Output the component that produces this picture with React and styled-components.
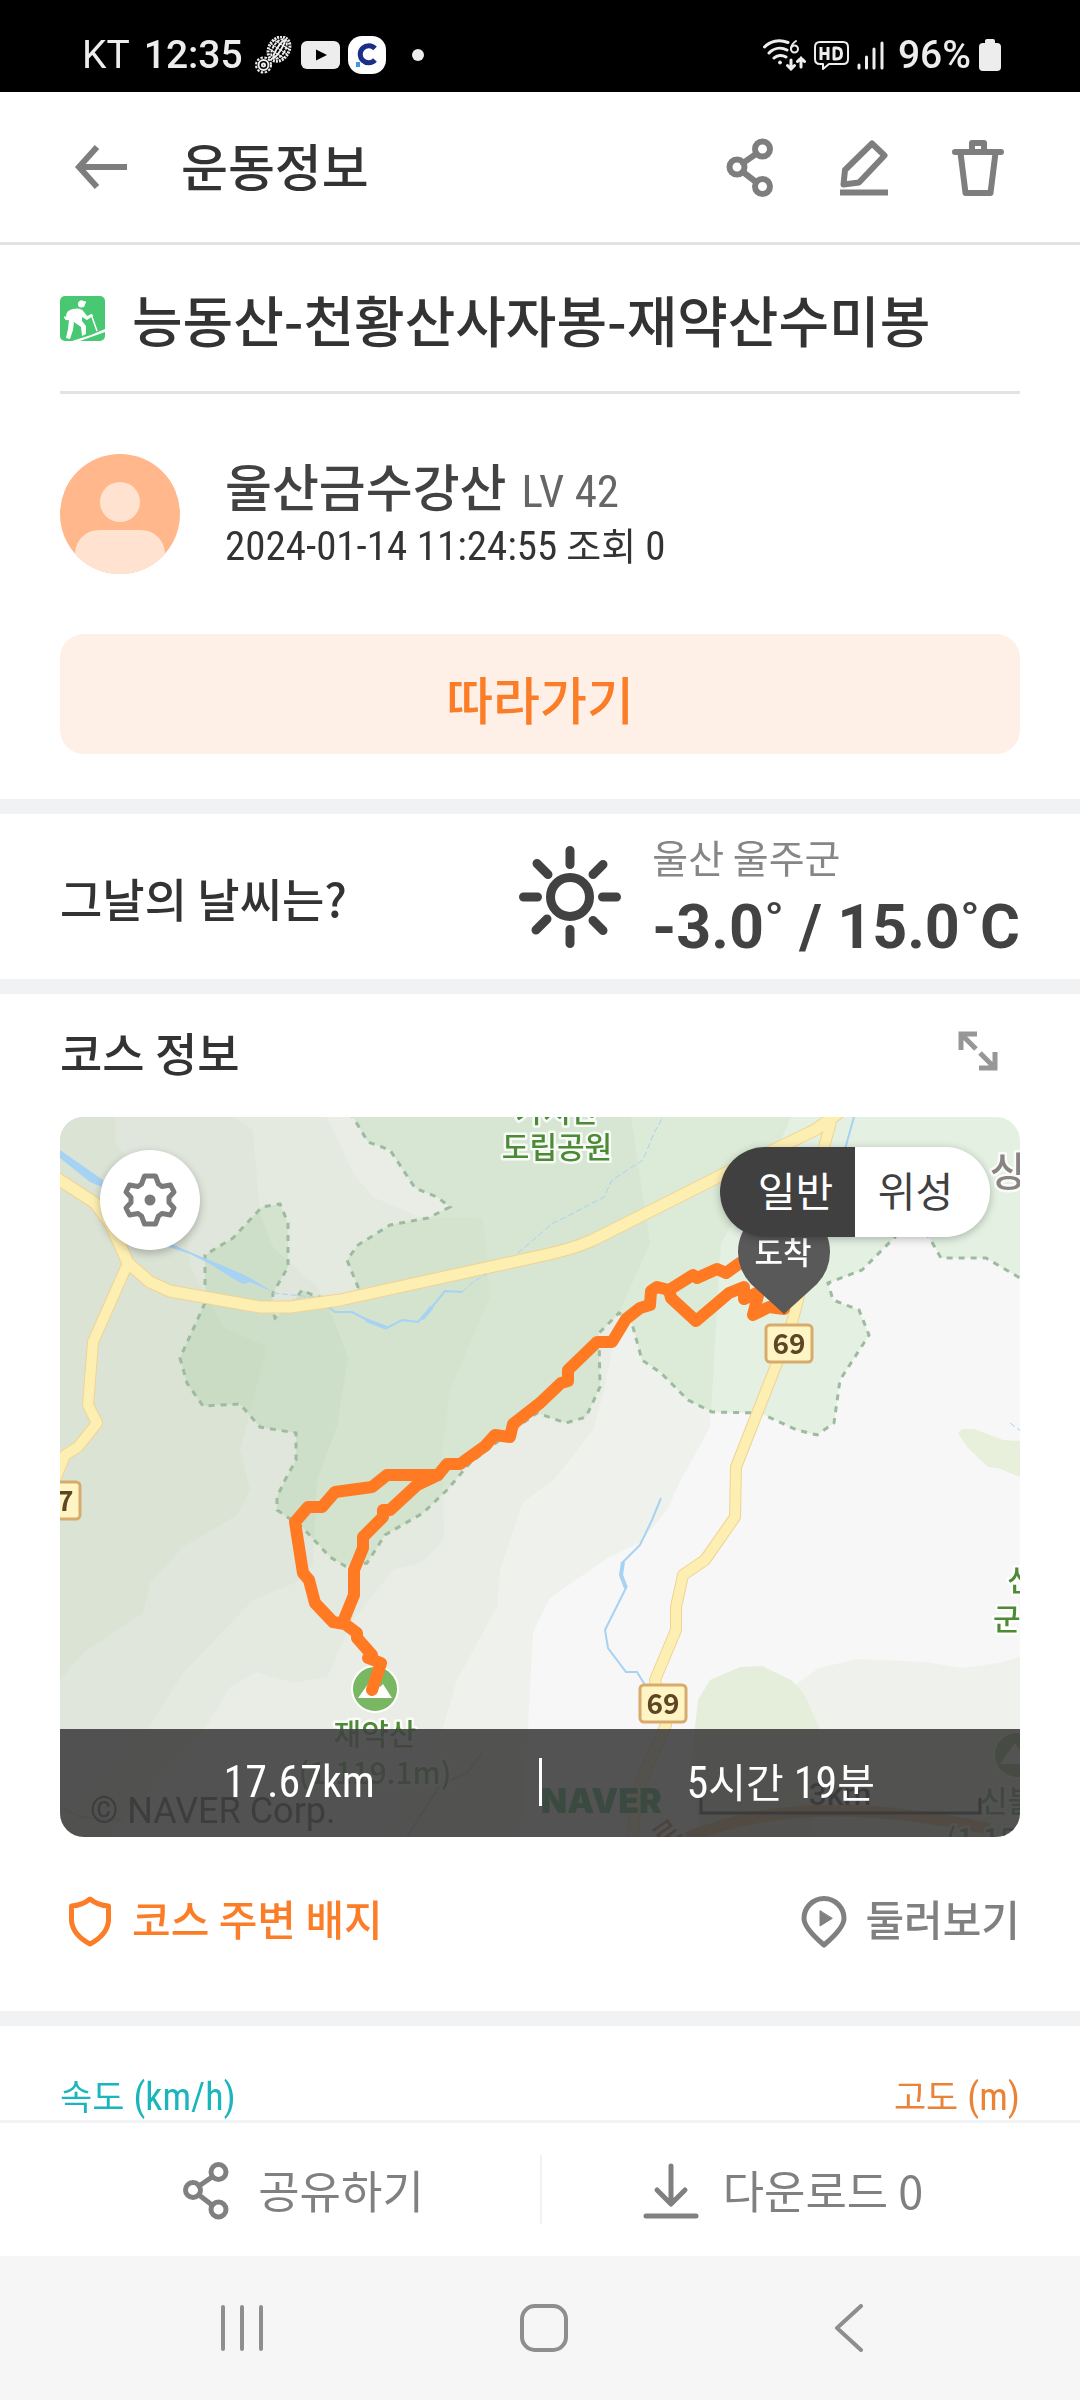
import React, { useState } from 'react';
import styled, { createGlobalStyle, css } from 'styled-components';

const GlobalStyle = createGlobalStyle`
  * {
    box-sizing: border-box;
  }

  body {
    margin: 0;
    background: #fff;
    color: #333;
    font-family: 'Roboto Condensed', 'Noto Sans CJK KR', sans-serif;
  }

  h1, h2, p {
    margin: 0;
    font-weight: 500;
  }

  button {
    padding: 0;
    border: 0;
    background: none;
    color: inherit;
    font: inherit;
    cursor: pointer;
  }

  a {
    color: inherit;
    text-decoration: none;
  }

  svg {
    display: block;
    flex: none;
  }
`;

const korean = css`
  font-family: 'Noto Sans CJK KR', sans-serif;
`;

const Page = styled.div`
  display: flex;
  flex-direction: column;
  min-height: 100vh;
`;

// Phone status bar
const StatusBar = styled.div`
  display: flex;
  align-items: center;
  justify-content: space-between;
  height: 92px;
  padding: 18px 79px 0 82px;
  background: #000;
  color: #ededed;
  font: 500 39px/46px Roboto, sans-serif;
`;

const StatusGroup = styled.div`
  display: flex;
  align-items: center;
  gap: 8px;
`;

const Carrier = styled.span`
  margin-right: 6px;
  font-weight: 400;
`;

const Clock = styled.span`
  margin-right: 4px;
`;

const Battery = styled.span`
  margin-left: 6px;
`;

const MoreDot = styled.span`
  width: 12px;
  height: 12px;
  margin-left: 18px;
  border-radius: 50%;
  background: #ededed;
`;

// App header
const Header = styled.header`
  display: flex;
  align-items: center;
  height: 153px;
  padding: 0 72px 0 71px;
  border-bottom: 3px solid #e3e3e3;
  color: #7e7e7e;
`;

const HeaderTitle = styled.h1`
  ${korean}
  flex: 1;
  margin-left: 50px;
  padding-bottom: 4px;
  color: #333;
  font-size: 51px;
  line-height: 72px;
`;

const HeaderActions = styled.div`
  display: flex;
  gap: 54px;
`;

const Section = styled.section`
  padding: 0 60px;
  border-bottom: ${(p) => (p.$last ? '0' : '15px solid #f0f2f4')};
`;

const CourseTitle = styled.div`
  display: flex;
  align-items: center;
  gap: 27px;
  height: 149px;
  border-bottom: 3px solid #e3e3e3;
`;

const CourseName = styled.h2`
  ${korean}
  font-size: 55px;
  line-height: 80px;
`;

const Profile = styled.div`
  display: flex;
  align-items: center;
  gap: 45px;
  height: 240px;
`;

const UserName = styled.p`
  display: flex;
  align-items: baseline;
  gap: 15px;
  color: #424242;
  line-height: 54px;
  white-space: nowrap;
`;

const Name = styled.span`
  ${korean}
  font-size: 51px;
`;

const Level = styled.span`
  color: #666;
  font-size: 45px;
  font-weight: 400;
`;

const Meta = styled.p`
  display: flex;
  align-items: baseline;
  gap: 9px;
  font-size: 41px;
  font-weight: 400;
  line-height: 50px;
`;

const Views = styled.span`
  ${korean}
  font-size: 38px;
`;

const FollowButton = styled.button`
  ${korean}
  display: block;
  width: 100%;
  height: 120px;
  margin-bottom: 45px;
  padding-top: 8px;
  border-radius: 24px;
  background: #fff0e7;
  color: #fb7d28;
  font-size: 51px;
  font-weight: 500;
`;

const Weather = styled.div`
  display: flex;
  align-items: center;
  height: 165px;
`;

const SectionTitle = styled.h2`
  ${korean}
  flex: 1;
  font-size: 46px;
  line-height: 64px;
`;

const WeatherInfo = styled.div`
  margin-left: 31px;
`;

const Place = styled.p`
  ${korean}
  color: #868686;
  font-size: 39px;
  font-weight: 400;
  line-height: 60px;
`;

const Temperature = styled.p`
  color: #424242;
  font: 700 61px/82px Roboto, sans-serif;
`;

const CourseHeader = styled.div`
  display: flex;
  align-items: center;
  height: 123px;
  padding: 0 18px 10px 0;
  color: #979797;

  ${SectionTitle} {
    color: #333;
  }
`;

// Course map with its floating controls
const MapCard = styled.div`
  position: relative;
  height: 720px;
  overflow: hidden;
  border-radius: 24px;
`;

const MapDrawing = styled.svg`
  width: 100%;
  height: 100%;
`;

const ParkArea = styled.path`
  fill: #ebf8ea;
  mix-blend-mode: multiply;
`;

const MapLabel = styled.text`
  ${korean}
  fill: ${(p) => p.$color || '#4d8a35'};
  stroke: #fff;
  stroke-opacity: 0.8;
  stroke-width: 5px;
  stroke-linejoin: round;
  paint-order: stroke;
  font-size: ${(p) => p.$size || 30}px;
  font-weight: 500;
`;

const SettingsButton = styled.button`
  position: absolute;
  top: 33px;
  left: 40px;
  display: grid;
  place-items: center;
  width: 100px;
  height: 100px;
  border-radius: 50%;
  background: #fff;
  box-shadow: 0 3px 9px rgba(0, 0, 0, 0.25);
  color: #7a7a7a;
`;

const MapTypes = styled.div`
  position: absolute;
  top: 30px;
  right: 30px;
  display: flex;
  overflow: hidden;
  border-radius: 45px;
  box-shadow: 0 2px 9px rgba(0, 0, 0, 0.25);
`;

const MapType = styled.button`
  ${korean}
  width: 135px;
  height: 90px;
  padding-bottom: 6px;
  background: ${(p) => (p.$active ? '#404040' : '#fff')};
  color: ${(p) => (p.$active ? '#fff' : '#404040')};
  font-size: 41px;

  &:first-child {
    padding-left: 16px;
  }

  &:last-child {
    padding-right: 14px;
  }
`;

const Totals = styled.div`
  position: absolute;
  right: 0;
  bottom: 0;
  left: 0;
  display: flex;
  align-items: center;
  height: 108px;
  padding-bottom: 2px;
  background: rgba(64, 64, 64, 0.9);
  color: #fff;
  font-size: 44px;
  line-height: 54px;
`;

const Total = styled.span`
  display: flex;
  flex: 1;
  align-items: baseline;
  justify-content: center;
`;

const Hangul = styled.span`
  ${korean}
  margin-right: ${(p) => (p.$gap ? '10px' : '0')};
  font-size: 41px;
  line-height: 50px;
`;

const TotalsDivider = styled.span`
  width: 3px;
  height: 48px;
  background: #fff;
`;

const CourseLinks = styled.div`
  display: flex;
  align-items: center;
  justify-content: space-between;
  height: 174px;
  padding-bottom: 6px;
`;

const CourseLink = styled.a`
  ${korean}
  display: flex;
  align-items: center;
  gap: 12px;
  color: ${(p) => (p.$accent ? '#fb7d28' : '#808080')};
  font-size: 42px;
  font-weight: 500;
  line-height: 60px;

  span {
    padding-bottom: 6px;
  }
`;

const ChartLegend = styled.div`
  display: flex;
  justify-content: space-between;
  padding: 49px 0 5px;
  font-size: 38px;
  line-height: 40px;
`;

const Legend = styled.span`
  display: flex;
  align-items: baseline;
  gap: 9px;
  height: 40px;
  color: ${(p) => p.$color};
`;

const LegendName = styled.span`
  ${korean}
  font-size: 35px;
`;

const ActionBar = styled.footer`
  display: grid;
  grid-template-columns: 1fr 2px 1fr;
  align-items: center;
  height: 136px;
  margin-top: auto;
  padding: 0 58px 0 60px;
  border-top: 3px solid #f1f3f4;
  background: #fff;
  color: #808080;
`;

const Action = styled.button`
  ${korean}
  display: flex;
  align-items: center;
  justify-content: center;
  gap: 22px;
  font-size: 45px;
  line-height: 64px;
`;

const ActionDivider = styled.span`
  height: 69px;
  background: #eff1f2;
`;

const NavBar = styled.nav`
  display: grid;
  grid-template-columns: repeat(3, 1fr);
  height: 144px;
  padding: 0 82px 0 91px;
  background: #f6f6f6;
  color: #8e8e8e;
`;

const NavButton = styled.button`
  display: grid;
  place-items: center;
`;

const Stroke = ({ size = 60, width = 5, children, ...rest }) => (
  <svg
    width={size}
    height={size}
    viewBox={`0 0 ${size} ${size}`}
    fill="none"
    stroke="currentColor"
    strokeWidth={width}
    strokeLinecap="round"
    strokeLinejoin="round"
    aria-hidden="true"
    {...rest}
  >
    {children}
  </svg>
);

const TireIcon = () => (
  <svg width="38" height="38" viewBox="0 0 38 38" fill="none" stroke="#ededed" aria-hidden="true">
    <g transform="rotate(32 24 13)">
      <ellipse cx="24" cy="13" rx="10" ry="13" strokeWidth="3" strokeDasharray="2 1" />
      <ellipse cx="24" cy="13" rx="6" ry="11" strokeWidth="2" strokeDasharray="3 1" />
      <ellipse cx="24" cy="13" rx="2" ry="10" strokeWidth="2" />
      <path d="M15 8h18M14 13h20M15 18h18" strokeWidth="1" />
    </g>
    <circle cx="8.500" cy="29" r="7.500" strokeWidth="2" strokeDasharray="2.500 1.500" />
    <circle cx="8.500" cy="29" r="5" strokeWidth="2" />
    <circle cx="8.500" cy="29" r="1.500" strokeWidth="2" />
  </svg>
);

const VideoIcon = () => (
  <svg width="39" height="28" viewBox="0 0 39 28" aria-hidden="true">
    <rect width="39" height="28" rx="6" fill="#ededed" />
    <path d="M15 8.500v11l11-5.500z" fill="#000" />
  </svg>
);

const CBadgeIcon = () => (
  <svg width="38" height="38" viewBox="0 0 38 38" aria-hidden="true">
    <rect width="38" height="38" rx="14" fill="#fff" />
    <path d="M27 12.500a8.500 8.500 0 1 0 0 11.500" fill="none" stroke="#1b2f86" strokeWidth="5" />
    <rect x="8" y="26" width="4" height="5" fill="#3f97ea" />
  </svg>
);

const WifiIcon = () => (
  <svg width="43" height="32" viewBox="0 0 43 32" fill="none" stroke="#ededed" strokeWidth="3" strokeLinecap="round" aria-hidden="true">
    <path d="M1.500 8C7 2 16 0 25 3.500M6 14c5-5 12-6 18-3M11 19c3-3 8-3.500 12-1" />
    <circle cx="17" cy="23.500" r="1.500" fill="#ededed" strokeWidth="1" />
    <path d="M33 2c-3 2-5 5-5 8" strokeWidth="2" />
    <circle cx="31.500" cy="10" r="3.500" strokeWidth="2" />
    <path d="M28 21v9m-3.500-3.500L28 30l3.500-3.500M38 28v-9m-3.500 3.500L38 19l3.500 3.500" strokeWidth="3" />
  </svg>
);

const HdIcon = () => (
  <svg width="35" height="31" viewBox="0 0 35 31" fill="none" stroke="#ededed" strokeWidth="2" strokeLinejoin="round" aria-hidden="true">
    <path d="M6 2h23q5 0 5 5v12q0 5-5 5H15l-6 5v-5H6q-5 0-5-5V7q0-5 5-5z" />
    <path d="M7 7v13M14 7v13M7 13.500h7M20 8v11h2.500q5 0 5-5.500t-5-5.500z" strokeWidth="3" />
  </svg>
);

const SignalIcon = () => (
  <svg width="27" height="30" viewBox="0 0 27 30" stroke="#ededed" strokeWidth="3" strokeLinecap="round" aria-hidden="true">
    <path d="M2 25v3M9.500 17v11M17 9v19M25 3v25" />
  </svg>
);

const BatteryIcon = () => (
  <svg width="22" height="32" viewBox="0 0 22 32" fill="#ededed" aria-hidden="true">
    <rect x="6" width="10" height="8" rx="2" />
    <rect y="4" width="22" height="28" rx="4" />
  </svg>
);

const BackArrowIcon = () => (
  <Stroke width={6} strokeLinecap="butt" strokeLinejoin="miter">
    <path d="M56 30H8M26 10L8 30l18 20" />
  </Stroke>
);

const ShareIcon = ({ width = 6 }) => (
  <Stroke width={width}>
    <circle cx="42.500" cy="12" r="7.500" />
    <circle cx="17" cy="30" r="7.500" />
    <circle cx="42.500" cy="49.500" r="7.500" />
    <path d="M36 17L23 26M23 35l13 10" />
  </Stroke>
);

const EditIcon = () => (
  <Stroke width={6}>
    <path d="M38 6.500L50.500 18.500 25 45.500 9.500 47.500 11 33z" />
    <path d="M6 55.500h48" strokeLinecap="butt" />
  </Stroke>
);

const TrashIcon = () => (
  <Stroke width={6}>
    <path d="M7 15h46M24 15V6h12v9M12.500 16l5 40h25l5-40" />
  </Stroke>
);

const HikerIcon = () => (
  <svg width="45" height="45" viewBox="0 0 45 45" role="img" aria-label="등산">
    <rect width="45" height="45" rx="5" fill="#49c873" />
    <path d="M12 45L31 39 45 33v3L20 45z" fill="#fff" />
    <circle cx="21.500" cy="8" r="3.500" fill="#fff" />
    <path d="M20 5.500l6 1" stroke="#fff" strokeWidth="2" />
    <path d="M6 21q0-7 7-8 8-2 11 3l3 4 5-2 1 2-6 4-5-3 0 4 4 5 0 8-4 2-1-9-7-5-1 8-3 9-4-1 2-9 1-9q-5 1-5-4z" fill="#fff" />
    <path d="M31 18l6 17" stroke="#fff" strokeWidth="1.500" />
  </svg>
);

const Avatar = () => (
  <svg width="120" height="120" viewBox="0 0 120 120" role="img" aria-label="프로필 사진">
    <clipPath id="avatar">
      <circle cx="60" cy="60" r="60" />
    </clipPath>
    <g clipPath="url(#avatar)">
      <rect width="120" height="120" fill="#ffb78b" />
      <circle cx="60" cy="48" r="20" fill="#ffe2d0" />
      <rect x="15" y="76" width="90" height="60" rx="24" fill="#ffe2d0" />
    </g>
  </svg>
);

const SunIcon = () => (
  <Stroke size={102} width={9} stroke="#424242">
    <circle cx="51" cy="51" r="19.500" />
    <path d="M51 4.500v14M51 83.500v14M4.500 51h14M83.500 51h14M18 17.500l11 11M84 18.500l-10 10M17 84l11-11M84 84.500l-10-10" />
  </Stroke>
);

const ExpandIcon = () => (
  <Stroke size={48} width={5} strokeLinecap="butt" strokeLinejoin="miter">
    <path d="M23 7H7v16M8 8l14 14M25 41h16V25M40 40L26 26" />
  </Stroke>
);

const GearIcon = () => (
  <Stroke width={5}>
    <path d="M24.500 6h11l3 8 3.500 2.500 8.500-1.500 3.500 7-5 5.500v5l5 5.500-3.500 7-8.500-1.500-3.500 2.500-3 8h-11l-3-8-3.500-2.500-8.500 1.500-3.500-7 5-5.500v-5l-5-5.500 3.500-7 8.500 1.500 3.500-2.500z" />
    <circle cx="30" cy="30" r="3" fill="currentColor" />
  </Stroke>
);

const ShieldIcon = () => (
  <Stroke width={5}>
    <path d="M30 8q8 6.500 18.500 7v15Q47 44 30 53 13 44 11.500 30V15Q22 14.500 30 8z" />
  </Stroke>
);

const PinPlayIcon = () => (
  <Stroke width={5}>
    <path d="M31 54Q11 37 11 27.500a20 20 0 0 1 40 0Q51 37 31 54z" />
    <path d="M27 20v15l12-7.500z" fill="currentColor" strokeWidth="1" />
  </Stroke>
);

const DownloadIcon = () => (
  <Stroke width={5}>
    <path d="M30 6v36M16 30l14 14 14-14M5 56h50" />
  </Stroke>
);

const RecentsIcon = () => (
  <Stroke size={48} width={4}>
    <path d="M5 3v42M24 3v42M43 3v42" />
  </Stroke>
);

const HomeIcon = () => (
  <Stroke size={48} width={4}>
    <rect x="2" y="2" width="44" height="44" rx="13" />
  </Stroke>
);

const NavBackIcon = () => (
  <Stroke size={48} width={4}>
    <path d="M38 2L14 24l24 22" />
  </Stroke>
);

const PARK =
  'M290-5L308 25 330 33 355 71 377 80 390 90 368 101 330 108 298 128 287 143 298 170 293 183 257 180 242 173 235 183 215 201 212 190 213 176 228 150V106L220 87 202 90 173 121 145 138V186L120 241 127 266 143 289 180 287 200 310 236 316V343L225 363 217 380V393L242 410 270 440 285 449 307 446 325 418 363 396 387 373 410 346 453 313 477 296 506 306 526 300 540 270 539 216 559 196 571 203 582 243 601 256 628 283 652 295 700 296 737 313 757 318 774 306 780 263 809 218 799 193 773 183 768 166 802 153 835 120 850 100 869 120 881 141H926L965 164V-5z';

const MAIN_ROAD =
  'M-5 60L35 86 50 106 68 146 90 165 110 174 200 190H230L280 183 430 150 480 139Q510 133 533 123L666 56 755 13 769 3 785-9';
const WEST_ROAD = 'M68 146L33 225 28 288 37 306 18 330 5 338-4 360';
const ROUTE_69 =
  'M771 5L764 30 752 120 738 183 730 213 676 350 675 400 645 443 623 458 616 490V513L595 563 606 608 587 650 575 683 573 725';

const TRACKS = [
  'M724 192L709 190 693 198 699 175 684 182V170L669 176 636 204 611 181 609 173 597 170 591 174 590 188 580 191 566 202 552 225H537L508 253V264L501 266 480 286 453 307 450 320 435 318 425 329 400 347H387L378 358H327L312 370 275 375 262 390H248L235 405 243 456 249 463 255 486 273 505 285 507 297 516V521L312 538 308 541 321 546 312 573',
  'M283 505L294 478V453L303 431V420L323 400V393H330L357 368 378 358',
  'M609 173L633 158 637 161 657 152 666 156 680 146 724 140',
];

const Plate = ({ x, y, children }) => (
  <g>
    <rect x={x} y={y} width="46" height="37" rx="4" fill="#fff4c4" stroke="#d8ab6d" strokeWidth="3" />
    <text x={x + 23} y={y + 29} textAnchor="middle" fontFamily="Noto Sans CJK KR, sans-serif" fontSize="28" fontWeight="700" fill="#5e4524">
      {children}
    </text>
  </g>
);

const Peak = ({ x, y }) => (
  <g>
    <circle cx={x} cy={y} r="23" fill="#7ab762" stroke="#fff" strokeWidth="2" />
    <path d={`M${x - 17} ${y + 9}l15-21 7 10 3-3 9 14z`} fill="#fff" />
  </g>
);

const CourseMap = () => (
  <MapDrawing viewBox="0 0 960 720" preserveAspectRatio="xMidYMid slice" role="img" aria-label="코스 지도">
    <rect width="960" height="720" fill="#f7f7f7" />
    {/* terrain, from the lowest level to the highest */}
    <path fill="#eff2ec" d="M0 0H731L718 30 661 126 654 243 650 310 621 363 607 393 580 426 549 440 490 481 473 516 468 612 460 720H0z" />
    <path fill="#e9ede5" d="M0 0H571L590 126 559 196 545 270 533 313 494 363 463 385 440 453 437 490 397 563 383 610 377 643 320 720H0z" />
    <path fill="#e5eae0" d="M0 0H267L293 56 313 80 360 100 423 101 430 180 390 273 382 336 384 423 360 446 333 453 293 503 267 560 233 566 197 555 170 570 145 612 100 660 50 720H0z" />
    <path fill="#e0e6db" d="M0 0H173L193 13 200 96 213 130 257 170 273 200 288 241 277 310 257 363 253 446 237 465 193 483 123 556 88 612 20 680 0 700z" />
    <path fill="#dbe3d5" d="M0 0H55V26L127 110 130 150 147 180 163 210 207 230 180 333 190 373 177 398 123 430 90 466 83 496 23 536 0 563z" />
    <path fill="#eff2ec" d="M960 540L938 546 902 551 866 545 797 542 759 551 718 580 663 603 647 617 640 720H960z" />
    <path fill="#e4eedb" d="M632 643L635 610 638 583 650 563 680 550 702 549 731 563 743 575 759 610 762 660 750 720H640z" />
    <path fill="#e8f0dc" d="M898 316L902 312H914L943 323 960 324V360L938 351 928 350 907 330z" />
    <ParkArea d={PARK} />
    <path d={PARK} fill="none" stroke="#9dbb9f" strokeWidth="3" strokeDasharray="6 6" />

    <g fill="#a6d2f4">
      <path d="M0 33L43 63 42 70 30 65 0 41z" />
      <path d="M100 122L130 135 180 156 192 162 213 175 190 165 183 167 172 161 150 147 130 137 100 127z" />
    </g>
    <g fill="none" stroke="#a6d2f4" strokeWidth="2">
      <path d="M213 176L262 181M402 175L413 165 430 155M458 136L493 106 506 100 544 80 552 63 583 43 594 16 604-2M950 306l12 9" strokeWidth="1" strokeDasharray="6 3" />
      <path d="M268 190L275 195H292L313 206 327 211 342 203 358 205 372 190 385 174 402 175M794 0L785 32M601 381L592 403 580 428 563 445 561 458 566 471 545 513 548 531 566 555H577L585 568M422 636L407 656 380 668 347 720M0 690L20 700 60 703" />
      <path d="M306 203L327 211M372 190L362 202M563 445L561 458 566 471" strokeWidth="4" />
    </g>

    <g fill="none" strokeLinejoin="round">
      <path d="M618 725Q680 697 755 694T930 712" stroke="#e8b06c" strokeWidth="12" />
      <path d={MAIN_ROAD} stroke="#f0d393" strokeWidth="13" />
      <path d={WEST_ROAD} stroke="#f0d393" strokeWidth="12" />
      <path d={ROUTE_69} stroke="#f0d393" strokeWidth="12" />
      <path d={MAIN_ROAD} stroke="#fdeeb2" strokeWidth="11" />
      <path d={WEST_ROAD} stroke="#fdeeb2" strokeWidth="10" />
      <path d={ROUTE_69} stroke="#fdeeb2" strokeWidth="10" />
    </g>

    <Plate x={706} y={208}>69</Plate>
    <Plate x={580} y={568}>69</Plate>
    <Plate x={-26} y={365}>77</Plate>

    <MapLabel x="497" y="5" textAnchor="middle">가지산</MapLabel>
    <MapLabel x="497" y="41" textAnchor="middle">도립공원</MapLabel>
    <MapLabel x="930" y="69" $size={40} $color="#8b8284">상북면</MapLabel>
    <MapLabel x="947" y="474">신불산</MapLabel>
    <MapLabel x="933" y="513">군립공원</MapLabel>
    <Peak x={315} y={572} />
    <MapLabel x="315" y="628" textAnchor="middle">재약산</MapLabel>
    <MapLabel x="315" y="667" textAnchor="middle">(1,119.1m)</MapLabel>
    <Peak x={957} y={638} />
    <MapLabel x="920" y="695">신불산</MapLabel>
    <MapLabel x="886" y="733">(1,159m)</MapLabel>
    <MapLabel x="602" y="734" $color="#a3622a" transform="rotate(-35 602 734)">로</MapLabel>

    <text x="30" y="706" fontFamily="Roboto, sans-serif" fontSize="36" fill="#222">© NAVER Corp.</text>
    <text x="481" y="696" fontFamily="Inter, sans-serif" fontSize="34" fontWeight="900" fill="#03a04e">NAVER</text>
    <text x="780" y="688" textAnchor="middle" fontFamily="Roboto, sans-serif" fontSize="32" fontWeight="500" fill="#111">3km</text>
    <path d="M641 681v15h279v-15" fill="none" stroke="#111" strokeWidth="3" />

    <g fill="none" stroke="#ff7a22" strokeWidth="12" strokeLinecap="round" strokeLinejoin="round">
      {TRACKS.map((d) => (
        <path key={d} d={d} />
      ))}
    </g>

    <path d="M724 197L691 167a46 46 0 1 1 66 0z" fill="#595959" />
    <text x="723" y="147" textAnchor="middle" fontFamily="Noto Sans CJK KR, sans-serif" fontSize="31" fontWeight="500" fill="#fff">
      도착
    </text>
  </MapDrawing>
);

const App = () => {
  const [mapType, setMapType] = useState('일반');

  return (
    <Page>
      <GlobalStyle />
      <StatusBar>
        <StatusGroup>
          <Carrier>KT</Carrier>
          <Clock>12:35</Clock>
          <TireIcon />
          <VideoIcon />
          <CBadgeIcon />
          <MoreDot />
        </StatusGroup>
        <StatusGroup>
          <WifiIcon />
          <HdIcon />
          <SignalIcon />
          <Battery>96%</Battery>
          <BatteryIcon />
        </StatusGroup>
      </StatusBar>

      <Header>
        <button aria-label="뒤로"><BackArrowIcon /></button>
        <HeaderTitle>운동정보</HeaderTitle>
        <HeaderActions>
          <button aria-label="공유"><ShareIcon /></button>
          <button aria-label="수정"><EditIcon /></button>
          <button aria-label="삭제"><TrashIcon /></button>
        </HeaderActions>
      </Header>

      <Section>
        <CourseTitle>
          <HikerIcon />
          <CourseName>능동산-천황산사자봉-재약산수미봉</CourseName>
        </CourseTitle>
        <Profile>
          <Avatar />
          <div>
            <UserName>
              <Name>울산금수강산</Name>
              <Level>LV 42</Level>
            </UserName>
            <Meta>
              <span>2024-01-14 11:24:55</span>
              <Views>조회</Views>
              <span>0</span>
            </Meta>
          </div>
        </Profile>
        <FollowButton>따라가기</FollowButton>
      </Section>

      <Section>
        <Weather>
          <SectionTitle>그날의 날씨는?</SectionTitle>
          <SunIcon />
          <WeatherInfo>
            <Place>울산 울주군</Place>
            <Temperature>-3.0˚ / 15.0˚C</Temperature>
          </WeatherInfo>
        </Weather>
      </Section>

      <Section>
        <CourseHeader>
          <SectionTitle>코스 정보</SectionTitle>
          <button aria-label="지도 확대"><ExpandIcon /></button>
        </CourseHeader>
        <MapCard>
          <CourseMap />
          <SettingsButton aria-label="지도 설정">
            <GearIcon />
          </SettingsButton>
          <MapTypes>
            {['일반', '위성'].map((type) => (
              <MapType key={type} $active={mapType === type} onClick={() => setMapType(type)}>
                {type}
              </MapType>
            ))}
          </MapTypes>
          <Totals>
            <Total>17.67km</Total>
            <TotalsDivider />
            <Total>
              5<Hangul $gap>시간</Hangul>19<Hangul>분</Hangul>
            </Total>
          </Totals>
        </MapCard>
        <CourseLinks>
          <CourseLink href="#badges" $accent>
            <ShieldIcon />
            <span>코스 주변 배지</span>
          </CourseLink>
          <CourseLink href="#tour">
            <PinPlayIcon />
            <span>둘러보기</span>
          </CourseLink>
        </CourseLinks>
      </Section>

      <Section $last>
        <ChartLegend>
          <Legend $color="#1ab5bd"><LegendName>속도</LegendName>(km/h)</Legend>
          <Legend $color="#ea8238"><LegendName>고도</LegendName>(m)</Legend>
        </ChartLegend>
      </Section>

      <ActionBar>
        <Action>
          <ShareIcon width={5} />
          공유하기
        </Action>
        <ActionDivider />
        <Action>
          <DownloadIcon />
          다운로드 0
        </Action>
      </ActionBar>

      <NavBar>
        <NavButton aria-label="최근 앱"><RecentsIcon /></NavButton>
        <NavButton aria-label="홈"><HomeIcon /></NavButton>
        <NavButton aria-label="뒤로"><NavBackIcon /></NavButton>
      </NavBar>
    </Page>
  );
};

export default App;
